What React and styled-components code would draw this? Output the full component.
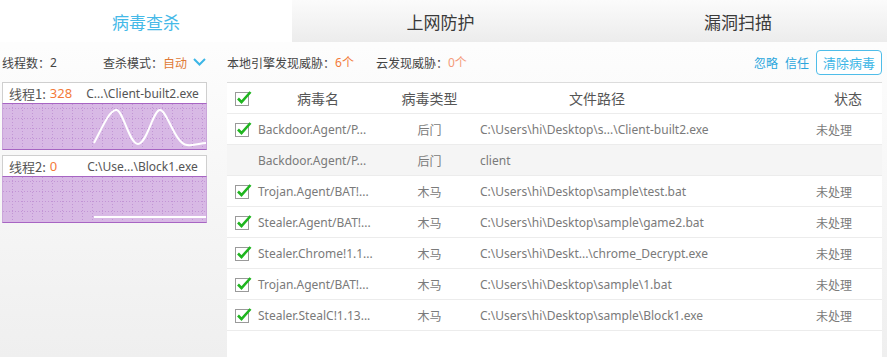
import React from 'react'
import styled, { createGlobalStyle } from 'styled-components'

const GlobalStyle = createGlobalStyle`
  html, body {
    margin: 0;
    padding: 0;
  }
  body {
    font-family: "Noto Sans", "Noto Sans CJK SC", sans-serif;
    color: #555;
  }
`

const Window = styled.div`
  width: 887px;
  height: 357px;
  display: flex;
  flex-direction: column;
  overflow: hidden;
  background: linear-gradient(#ffffff, #efefef);
`

const Tabs = styled.div`
  display: flex;
  height: 42px;
  flex-shrink: 0;
`

const Tab = styled.div`
  flex: ${p => (p.$w ? `0 0 ${p.$w}px` : '1')};
  display: flex;
  align-items: center;
  justify-content: center;
  font-family: "Noto Sans CJK SC", sans-serif;
  font-size: 17px;
  color: ${p => (p.$active ? '#45b9e8' : '#3a3a3a')};
  background: ${p => (p.$active ? '#fff' : 'linear-gradient(#fbfbfb, #ececec)')};
`

const Main = styled.div`
  flex: 1;
  display: flex;
  min-height: 0;
`

const Side = styled.div`
  width: 227px;
  flex-shrink: 0;
  display: flex;
  flex-direction: column;
`

const Content = styled.div`
  flex: 1;
  display: flex;
  flex-direction: column;
  margin-right: 5px;
`

const Bar = styled.div`
  height: 40px;
  flex-shrink: 0;
  display: flex;
  align-items: center;
  font-family: "Noto Sans CJK SC", sans-serif;
  font-size: 12px;
  color: #444;
  padding-left: ${p => p.$pad || 0}px;
`

const Item = styled.span`
  display: flex;
  align-items: center;
  margin-left: ${p => p.$ml || 0}px;
`

const Num = styled.span`
  color: ${p => p.$c || '#f37a3a'};
  font-family: "Noto Sans", "Noto Sans CJK SC", sans-serif;
`

const Link = styled.span`
  color: #2aa6dc;
  margin-right: 7px;
`

const Spacer = styled.div`
  flex: 1;
`

const ClearBtn = styled.button`
  height: 25px;
  width: 66px;
  border: 1px solid #4fbde9;
  border-radius: 4px;
  background: #fff;
  color: #3cb6e6;
  font-family: "Noto Sans CJK SC", sans-serif;
  font-size: 13px;
  padding: 0;
`

const Card = styled.div`
  width: 205px;
  margin-left: 2px;
  margin-bottom: 5px;
  display: flex;
  flex-direction: column;
`

const CardHead = styled.div`
  height: 20px;
  border: 1px solid #cfcfcf;
  border-bottom: none;
  background: #fff;
  display: flex;
  align-items: center;
  padding-left: 6px;
  font-size: 13px;
  color: #555;
  white-space: nowrap;
`

const Label = styled.span`
  font-family: "Noto Sans CJK SC", sans-serif;
`

const CardPath = styled.span`
  font-size: 12px;
  margin-left: ${p => p.$ml}px;
`

const Graph = styled.div`
  height: 45px;
  border-top: 1px solid #a765c3;
  border-bottom: 1px solid #a765c3;
  border-left: 1px solid #caa6da;
  border-right: 1px solid #caa6da;
  background: #d8b9e5;
  svg {
    display: block;
  }
`

const Table = styled.div`
  flex: 1;
  background: #fff;
  border-top: 1px solid #dcdcdc;
`

const Row = styled.div`
  display: grid;
  grid-template-columns: 29px 129px 89px 246px 90px 72px;
  height: 30px;
  align-items: center;
  border-bottom: 1px solid #ececec;
  background: ${p => (p.$shade ? '#f5f5f5' : '#fff')};
  font-size: ${p => (p.$head ? 14 : 12)}px;
  color: ${p => (p.$head ? '#555' : '#7a7a7a')};
  white-space: nowrap;
`

const Cell = styled.div`
  font-family: ${p => (p.$cjk ? '"Noto Sans CJK SC", sans-serif' : '"Noto Sans", "Noto Sans CJK SC", sans-serif')};
  text-align: ${p => p.$align || 'left'};
  padding-left: ${p => p.$pl || 0}px;
  overflow: visible;
`

const Box = styled.div`
  display: flex;
  padding-left: 8px;
`

const Check = () => (
  <svg width="18" height="16" viewBox="0 0 18 16">
    <rect x="0.5" y="2.5" width="13" height="13" fill="#fff" stroke="#9a9a9a" />
    <path d="M3 8.5 L6.5 12 L15.5 2" fill="none" stroke="#1fb51f" strokeWidth="2.6" />
  </svg>
)

const Chevron = () => (
  <svg width="13" height="8" viewBox="0 0 13 8" style={{ marginLeft: 6 }}>
    <path d="M1 1 L6.5 6.5 L12 1" fill="none" stroke="#3cb6e6" strokeWidth="2" />
  </svg>
)

const gridX = Array.from({ length: 20 }, (_, i) => 9.5 + i * 10)
const gridY = [4.5, 14.5, 24.5, 34.5]

const Plot = ({ d }) => (
  <svg width="203" height="45" viewBox="0 0 203 45">
    {gridX.map(x => (
      <line key={'x' + x} x1={x} y1="0" x2={x} y2="45" stroke="#c295d5" strokeDasharray="1 2" />
    ))}
    {gridY.map(y => (
      <line key={'y' + y} x1="0" y1={y} x2="203" y2={y} stroke="#c295d5" strokeDasharray="1 2" />
    ))}
    <path d={d} fill="none" stroke="#fff" strokeWidth="2" />
  </svg>
)

const rows = [
  { name: 'Backdoor.Agent/P...', type: '后门', path: 'C:\\Users\\hi\\Desktop\\s...\\Client-built2.exe', state: '未处理', check: true },
  { name: 'Backdoor.Agent/P...', type: '后门', path: 'client', state: '', check: false },
  { name: 'Trojan.Agent/BAT!...', type: '木马', path: 'C:\\Users\\hi\\Desktop\\sample\\test.bat', state: '未处理', check: true },
  { name: 'Stealer.Agent/BAT!...', type: '木马', path: 'C:\\Users\\hi\\Desktop\\sample\\game2.bat', state: '未处理', check: true },
  { name: 'Stealer.Chrome!1.1...', type: '木马', path: 'C:\\Users\\hi\\Deskt...\\chrome_Decrypt.exe', state: '未处理', check: true },
  { name: 'Trojan.Agent/BAT!...', type: '木马', path: 'C:\\Users\\hi\\Desktop\\sample\\1.bat', state: '未处理', check: true },
  { name: 'Stealer.StealC!1.13...', type: '木马', path: 'C:\\Users\\hi\\Desktop\\sample\\Block1.exe', state: '未处理', check: true },
]

const App = () => (
  <Window>
    <GlobalStyle />
    <Tabs>
      <Tab $active $w={292}>病毒查杀</Tab>
      <Tab $w={297}>上网防护</Tab>
      <Tab>漏洞扫描</Tab>
    </Tabs>
    <Main>
      <Side>
        <Bar $pad={2}>
          <Item>线程数：<Num $c="#444">2</Num></Item>
          <Item $ml={46}>查杀模式：<span style={{ color: '#e07a36' }}>自动</span><Chevron /></Item>
        </Bar>
        <Card>
          <CardHead>
            <Label>线程1:</Label>
            <Num style={{ marginLeft: 4 }}>328</Num>
            <CardPath $ml={14}>C...\Client-built2.exe</CardPath>
          </CardHead>
          <Graph>
            <Plot d="M91 39 C100 22, 106 7, 113 6 C120 5, 126 40, 135 40 C144 40, 150 6, 157 6 C164 6, 172 40, 184 41 C192 42, 197 39, 203 39" />
          </Graph>
        </Card>
        <Card>
          <CardHead>
            <Label>线程2:</Label>
            <Num style={{ marginLeft: 4 }}>0</Num>
            <CardPath $ml={30}>C:\Use...\Block1.exe</CardPath>
          </CardHead>
          <Graph>
            <Plot d="M91 40 L203 40" />
          </Graph>
        </Card>
      </Side>
      <Content>
        <Bar>
          <Item>本地引擎发现威胁：<Num>6个</Num></Item>
          <Item $ml={22}>云发现威胁：<Num $c="#f49a7a">0个</Num></Item>
          <Spacer />
          <Link>忽略</Link>
          <Link>信任</Link>
          <ClearBtn>清除病毒</ClearBtn>
        </Bar>
        <Table>
          <Row $head>
            <Box><Check /></Box>
            <Cell $cjk $align="center" style={{ paddingRight: 5 }}>病毒名</Cell>
            <Cell $cjk $align="center">病毒类型</Cell>
            <Cell $cjk $align="center">文件路径</Cell>
            <div />
            <Cell $cjk $align="center" $pl={4}>状态</Cell>
          </Row>
          {rows.map((r, i) => (
            <Row key={i} $shade={!r.check}>
              <Box>{r.check && <Check />}</Box>
              <Cell $pl={2}>{r.name}</Cell>
              <Cell $cjk $align="center">{r.type}</Cell>
              <Cell $pl={6}>{r.path}</Cell>
              <div />
              <Cell $cjk $pl={6}>{r.state}</Cell>
            </Row>
          ))}
        </Table>
      </Content>
    </Main>
  </Window>
)

export default App
